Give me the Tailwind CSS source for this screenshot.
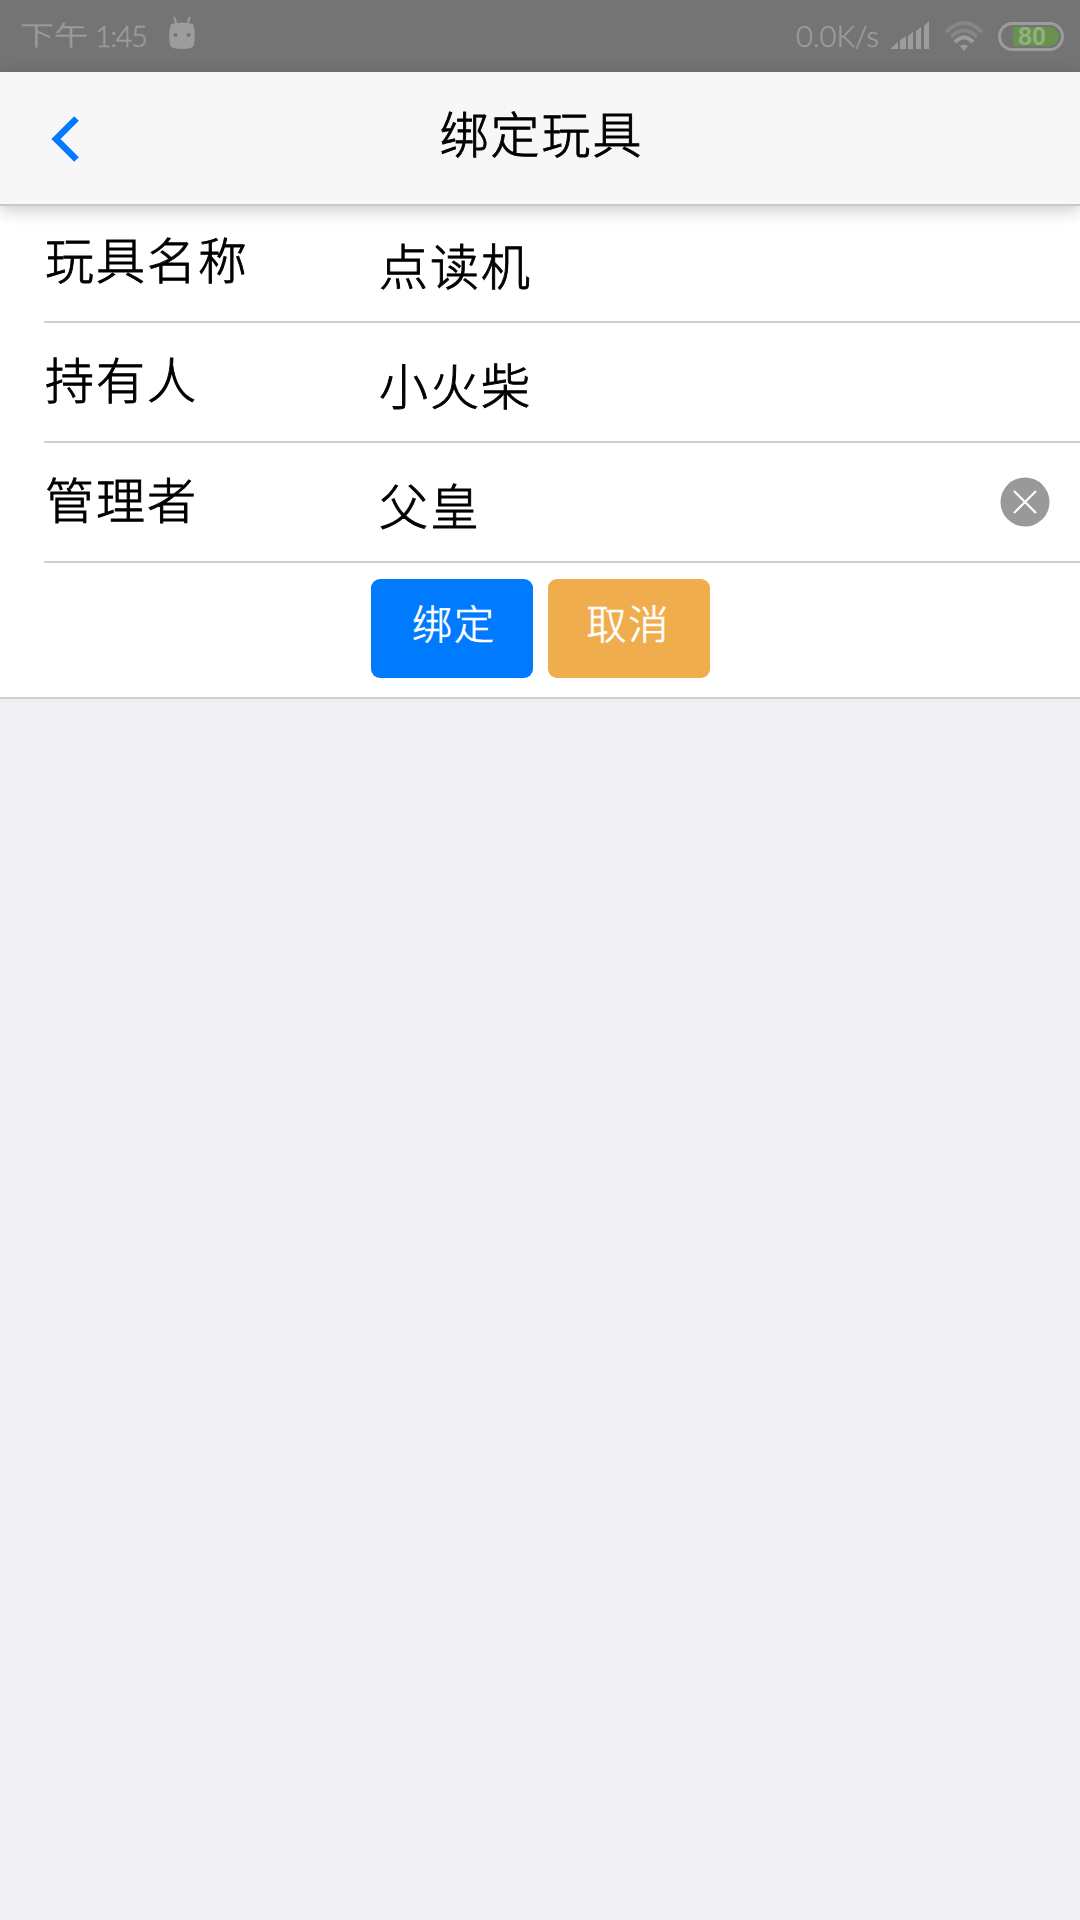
<!DOCTYPE html>
<html lang="zh-CN">
<head>
<meta charset="utf-8">
<title>绑定玩具</title>
<script src="https://cdn.jsdelivr.net/npm/@tailwindcss/browser@4"></script>
</head>
<body class="h-[1920px] w-[1080px] overflow-hidden bg-[#efeff4] font-['Noto_Sans_CJK_SC',sans-serif] font-light text-black">
  <div class="flex h-[72px] items-center justify-between bg-[#747474] pr-4 pl-5 text-[#9c9c9c]">
    <div class="flex items-center">
      <span class="flex w-[68px] origin-left -translate-y-[2px] scale-y-[0.78] text-[34px] leading-none whitespace-nowrap [-webkit-text-stroke:0.6px]">下午</span>
      <span class="ml-[7px] w-[52px] -translate-y-[1px] font-['Lato',sans-serif] text-[29px] leading-none font-light tracking-[-1.5px] whitespace-nowrap [-webkit-text-stroke:0.5px]">1:45</span>
      <svg class="ml-[21px] h-[36px] w-[28px] -translate-y-[3px]" viewBox="0 0 28 36" fill="none">
        <path d="M6 2Q8 5 8 9M22 2Q20 5 20 9" stroke="#9c9c9c" stroke-width="2"/>
        <path d="M3 9Q14 6 25 9Q28 18 26 30Q25 34 14 34Q3 34 2 30Q0 18 3 9Z" fill="#9c9c9c"/>
        <circle cx="7.500" cy="20" r="2" fill="#747474"/><circle cx="20.500" cy="20" r="2" fill="#747474"/>
      </svg>
    </div>
    <div class="flex items-center">
      <span class="w-[84px] -translate-y-[1px] font-['Lato',sans-serif] text-[29px] leading-none font-light whitespace-nowrap [-webkit-text-stroke:0.5px]">0.0K/s</span>
      <svg class="ml-[10px] h-[28px] w-[40px] -translate-y-[1px]" viewBox="0 0 40 28" fill="#9c9c9c">
        <path d="M0 28L8 21V28ZM10 19l6-4V28h-6ZM18 15l5-4V28h-5ZM26 10l5-4V28h-5ZM34 5l5-5V28h-5Z"/>
      </svg>
      <svg class="ml-[14px] h-[30px] w-[40px]" viewBox="0 0 40 30" fill="none" stroke-width="4">
        <path d="M2 11Q20-7 38 11" stroke="#868686"/><path d="M7 16Q20 3 33 16" stroke="#868686"/>
        <path d="M11 21Q20 12 29 21" stroke="#9c9c9c"/><path d="M16 25Q20 22 24 25L20 30Z" fill="#9c9c9c"/>
      </svg>
      <div class="ml-3.5 flex h-[29px] w-[66px] rounded-full border-[3px] border-[#9c9c9c] p-0.5">
        <div class="ml-2.5 flex h-full flex-1 items-center rounded-r-full bg-[#68924f] pl-[5px] font-['Liberation_Sans',sans-serif] text-[25px] leading-none font-bold text-[#95b080]">80</div>
      </div>
    </div>
  </div>

  <header class="relative z-10 grid h-[134px] grid-cols-[120px_1fr_120px] border-b-2 border-[#c8c8c8] bg-[#f7f7f7] shadow-[0_4px_16px_rgba(0,0,0,0.22)]">
    <svg class="mt-[44px] ml-[51px] h-[46px] w-[28px]" viewBox="0 0 28 46" fill="none" stroke="#007aff" stroke-width="6.500"><path d="M25.500 2.500L5 23L25.500 43.500"/></svg>
    <h1 class="pt-[22px] pl-[3px] text-center text-[49px] leading-[76px] font-light tracking-[2px] [-webkit-text-stroke:0.9px]">绑定玩具</h1>
  </header>

  <main class="h-[493px] border-b-2 border-[#d0d0d2] bg-white pl-[44px] text-[49px] leading-[76px] tracking-[2px]">
    <div class="flex h-[117px] border-b-2 border-[#cfcfd1] [-webkit-text-stroke:0.9px]"><label class="w-[334px] pt-[14px] pl-px">玩具名称</label><span class="pt-[20px] pl-px">点读机</span></div>
    <div class="flex h-[120px] border-b-2 border-[#cfcfd1] [-webkit-text-stroke:0.9px]"><label class="w-[334px] pt-[17px] pl-px">持有人</label><span class="pt-[23px] pl-px">小火柴</span></div>
    <div class="flex h-[120px] border-b-2 border-[#cfcfd1] [-webkit-text-stroke:0.9px]"><label class="w-[334px] pt-[17px] pl-px">管理者</label><span class="flex-1 pt-[23px] pl-px">父皇</span>
      <svg class="mt-[34px] mr-[30px] h-[50px] w-[50px]" viewBox="0 0 50 50"><circle cx="25" cy="25" r="24.500" fill="#999"/><path d="M14 14L36 36M36 14L14 36" stroke="#fff" stroke-width="2.200"/></svg>
    </div>
    <div class="-ml-[44px] flex justify-center gap-[15px] pt-[16px] text-[40px] leading-[62px] tracking-[2px] text-white [-webkit-text-stroke:0.7px]">
      <button class="h-[99px] w-[162px] rounded-[9px] bg-[#007aff] pb-[14px] pl-[5px]">绑定</button>
      <button class="h-[99px] w-[162px] rounded-[9px] bg-[#f0ad4e] pb-[14px]">取消</button>
    </div>
  </main>
</body>
</html>
